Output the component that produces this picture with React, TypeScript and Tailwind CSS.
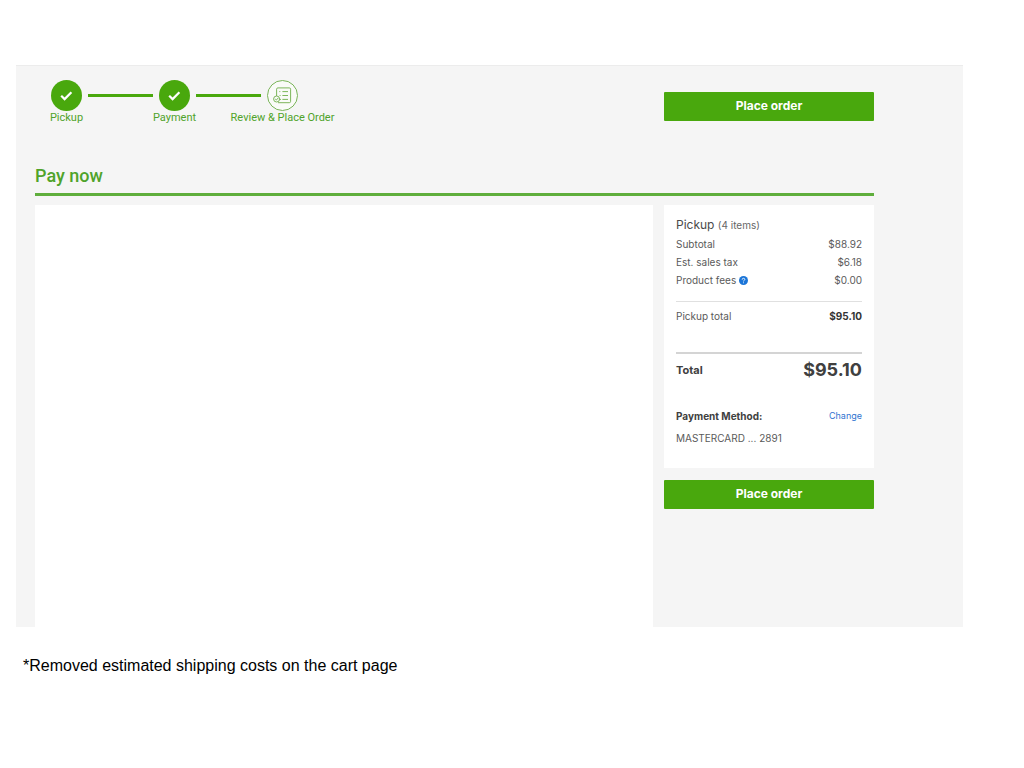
import { Fragment } from "react";

const steps = [
  { label: "Pickup", done: true },
  { label: "Payment", done: true },
  { label: "Review & Place Order", done: false },
];

const charges = [
  { label: "Subtotal", amount: "$88.92" },
  { label: "Est. sales tax", amount: "$6.18" },
  { label: "Product fees", amount: "$0.00", help: true },
];

function CheckIcon() {
  return (
    <svg viewBox="0 0 31 31" className="size-[31px]" aria-hidden="true">
      <circle cx="15.5" cy="15.5" r="15.5" fill="#49a80d" />
      <path
        d="M10.2 15.7l3.4 3.4 6.8-6.8"
        fill="none"
        stroke="#fff"
        strokeWidth="2.2"
      />
    </svg>
  );
}

function ReviewIcon() {
  return (
    <svg viewBox="0 0 31 31" className="size-[31px]" fill="none" stroke="#6fae4a" aria-hidden="true">
      <circle cx="15.5" cy="15.5" r="15" fill="#fafbf8" stroke="#79b458" />
      <path
        d="M9.6 16V9.2q0-1.3 1.3-1.3h11.4q1.3 0 1.3 1.3v12.2q0 1.3-1.3 1.3H11"
        strokeWidth="0.9"
      />
      <path d="M15.4 11.6h5.6M15.4 15.5h5.6M15.4 19.4h5.6M12.3 11.6h1M12.6 15.5h1M13 19.4h1" strokeWidth="0.9" />
      <circle cx="9.6" cy="19" r="3" strokeWidth="0.9" />
      <path d="M8.2 19l1.1 1.1 2-2.2" strokeWidth="0.9" />
    </svg>
  );
}

function HelpIcon() {
  return (
    <svg viewBox="0 0 9 9" className="size-[9px]" aria-hidden="true">
      <circle cx="4.5" cy="4.5" r="4.5" fill="#1b75d8" />
      <path d="M3.2 3.6q0-1.3 1.3-1.3t1.3 1.2q0 .7-1.3 1.4v.4" fill="none" stroke="#fff" strokeWidth="0.9" />
      <circle cx="4.5" cy="6.7" r=".5" fill="#fff" />
    </svg>
  );
}

function PlaceOrderButton() {
  return (
    <button
      type="button"
      className="block w-full rounded-[1px] bg-[#49a80d] pt-1.5 pb-[7px] text-xs leading-4 font-bold text-white"
    >
      Place order
    </button>
  );
}

export default function App() {
  return (
    <div className="bg-white pt-[65px] pr-[61px] pb-8 pl-4 font-['Inter','Liberation_Sans',sans-serif] text-[#5a5a5a]">
      <main className="border-t border-[#ececec] bg-[#f5f5f5] pr-[89px] pl-[19px]">
        <header className="flex items-start justify-between pt-3.5">
          <ol className="flex pl-4">
            {steps.map((step, index) => (
              <Fragment key={step.label}>
                {index > 0 && <li aria-hidden="true" className="mx-1.5 mt-3.5 h-[3px] w-[65px] bg-[#49a80d]" />}
                <li className="flex w-[31px] flex-col items-center">
                  {step.done ? <CheckIcon /> : <ReviewIcon />}
                  <span className="font-['Roboto','Liberation_Sans',sans-serif] text-[11px] leading-3.5 whitespace-nowrap text-[#4fa32a]">
                    {step.label}
                  </span>
                </li>
              </Fragment>
            ))}
          </ol>
          <div className="mt-3 w-[210px]">
            <PlaceOrderButton />
          </div>
        </header>

        <h1 className="mt-[38px] border-b-[3px] border-[#5fae3c] pb-1 font-['Roboto','Liberation_Sans',sans-serif] text-lg leading-[26px] font-medium text-[#4fa32a]">
          Pay now
        </h1>

        <div className="mt-[9px] flex items-stretch gap-[11px]">
          <section aria-label="Payment details" className="min-h-[422px] flex-1 bg-white" />
          <aside className="w-[210px]">
            <div className="mb-3 bg-white px-3 pt-3 pb-[21px] text-[10px]">
              <h2 className="text-xs leading-4 text-[#4a4a4a]">
                Pickup <span className="text-[10px] text-[#666]">(4 items)</span>
              </h2>
              <dl className="mt-0.5">
                {charges.map((charge) => (
                  <div key={charge.label} className="flex justify-between leading-[18px]">
                    <dt className="flex items-center gap-[3px]">
                      {charge.label}
                      {charge.help && (
                        <button type="button" aria-label="About product fees">
                          <HelpIcon />
                        </button>
                      )}
                    </dt>
                    <dd>{charge.amount}</dd>
                  </div>
                ))}
                <div className="mt-3 flex justify-between border-t border-[#e0e0e0] pt-[5px] leading-[18px]">
                  <dt>Pickup total</dt>
                  <dd className="font-bold text-[#333]">$95.10</dd>
                </div>
                <div className="mt-[27px] flex items-center justify-between border-t-2 border-[#d4d4d4] pt-1 leading-6 font-bold text-[#404040]">
                  <dt className="text-[11px] leading-6">Total</dt>
                  <dd className="text-lg leading-6">$95.10</dd>
                </div>
              </dl>
              <div className="mt-[25px] flex items-center justify-between leading-[18px]">
                <h3 className="font-bold text-[#404040]">Payment Method:</h3>
                <a href="#payment" className="text-[9px] leading-4 text-[#2f73d0]">
                  Change
                </a>
              </div>
              <p className="mt-1 leading-[18px]">MASTERCARD ... 2891</p>
            </div>
            <PlaceOrderButton />
          </aside>
        </div>
      </main>
      <p className="mt-7 pl-[7px] font-['Liberation_Sans',Arial,sans-serif] text-base leading-[22px] text-black">
        *Removed estimated shipping costs on the cart page
      </p>
    </div>
  );
}
